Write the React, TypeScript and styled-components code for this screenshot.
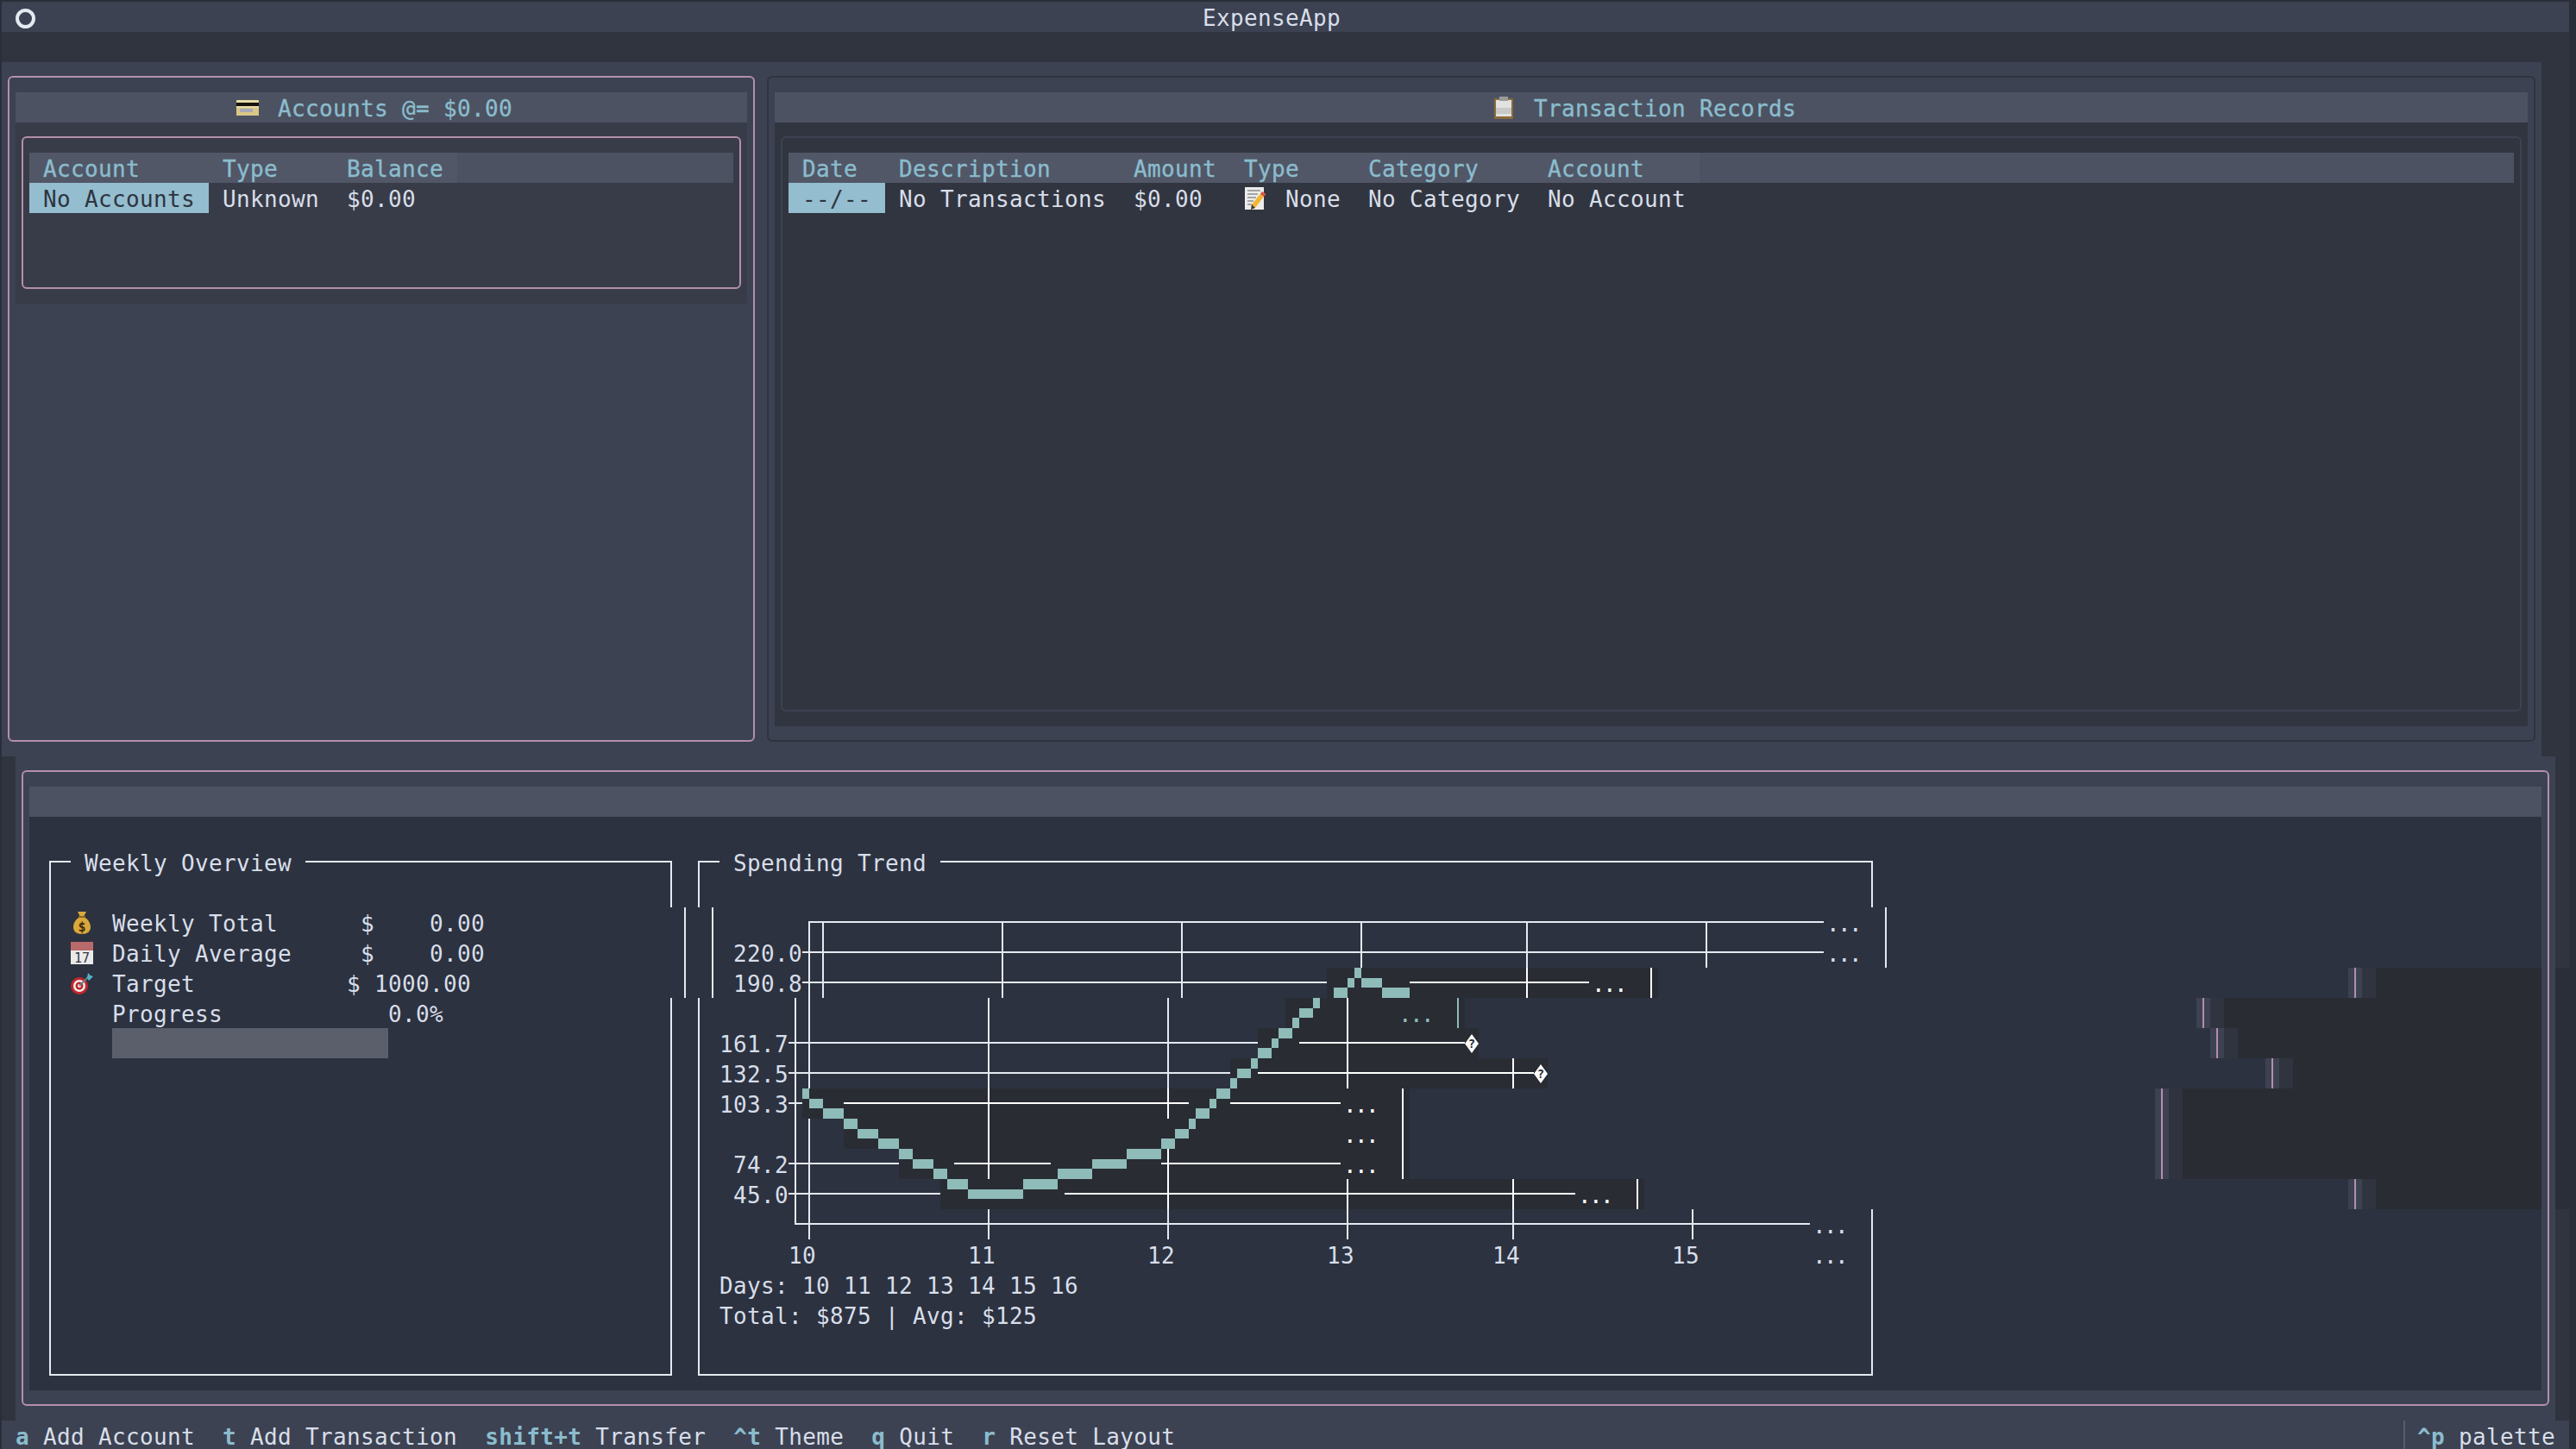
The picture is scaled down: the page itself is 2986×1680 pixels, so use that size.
import styled, { createGlobalStyle } from 'styled-components'

const CELL = 16
const ROW = 35
const TEXT_LINE = 39

const GlobalStyle = createGlobalStyle`
  html, body {
    margin: 0;
    padding: 0;
    background: #2a2e38;
    overflow: hidden;
  }
  * {
    box-sizing: border-box;
  }
`

const Terminal = styled.div`
  width: 2976px;
  height: 1678px;
  margin: 2px 0 0 2px;
  overflow: hidden;
  background: #30343f;
  color: #d8dee9;
  font-family: 'DejaVu Sans Mono', 'Liberation Mono', monospace;
  font-size: 26px;
  letter-spacing: 0.35px;
  line-height: ${TEXT_LINE}px;
  white-space: pre;
`

const Header = styled.div`
  height: ${ROW}px;
  padding: 0 48px 0 16px;
  display: grid;
  grid-template-columns: 1fr auto 1fr;
  align-items: start;
  background: #3c4252;
`

const Ring = styled.div`
  width: 23px;
  height: 23px;
  align-self: center;
  border: 4px solid #e5e9f0;
  border-radius: 50%;
`

const Spacer = styled.div`
  height: ${ROW}px;
`

const TopPanes = styled.div`
  width: 2944px;
  height: 805px;
  padding: 16px 7px 17px;
  display: flex;
  gap: 14px;
  background: #3c4252;
`

const Pane = styled.section<{ $width: number; $focused?: boolean }>`
  width: ${(p) => p.$width}px;
  padding: 17px 7px 16px;
  display: flex;
  flex-direction: column;
  border: 2px solid ${(p) => (p.$focused ? '#b48ead' : '#30343f')};
  border-radius: 6px;
`

const TitleBar = styled.div`
  height: ${ROW}px;
  flex: none;
  padding-right: ${CELL}px;
  display: flex;
  align-items: flex-start;
  justify-content: center;
  gap: 22px;
  background: #4c5261;
  color: #8bbccd;
  -webkit-text-stroke: 0.35px #8bbccd;
`

const TableArea = styled.div<{ $height: number; $tone: string }>`
  height: ${(p) => p.$height}px;
  padding: 16px 7px 17px;
  background: ${(p) => p.$tone};
`

const TableBox = styled.div<{ $border: string }>`
  height: 100%;
  padding: 17px 7px;
  border: 2px solid ${(p) => p.$border};
  border-radius: 6px;
`

const HeadRow = styled.div`
  height: ${ROW}px;
  display: flex;
  background: #4c5261;
  color: #8bbccd;
  -webkit-text-stroke: 0.35px #8bbccd;
`

const DataRow = styled.div`
  height: ${ROW}px;
  display: flex;
`

const HeadCell = styled.div<{ $cols: number }>`
  width: ${(p) => p.$cols * CELL}px;
  height: ${ROW}px;
  padding: 0 ${CELL}px;
  background: #515767;
`

const DataCell = styled.div<{ $cols: number; $cursor?: boolean; $center?: boolean }>`
  width: ${(p) => p.$cols * CELL}px;
  height: ${ROW}px;
  padding: 0 ${CELL}px;
  display: flex;
  align-items: flex-start;
  justify-content: ${(p) => (p.$center ? 'center' : 'flex-start')};
  background: ${(p) => (p.$cursor ? '#94bdcf' : 'transparent')};
  color: ${(p) => (p.$cursor ? '#2e3440' : 'inherit')};
`

const IconLabel = styled.span`
  margin-left: 22px;
`

const BottomRow = styled.div`
  margin-left: ${CELL}px;
  display: flex;
`

const BottomPane = styled.section`
  width: 2944px;
  height: 770px;
  padding: 16px 7px 17px;
  background: #3c4252;
`

const BottomBox = styled.div`
  height: 100%;
  padding: 17px 7px 16px;
  border: 2px solid #b48ead;
  border-radius: 6px;
`

const EmptyBar = styled.div`
  height: ${ROW}px;
  background: #4c5261;
`

const Body = styled.div`
  position: relative;
  width: 2912px;
  height: 665px;
  background: #2c3240;
`

const CurveLayer = styled.svg`
  position: absolute;
  top: 0;
  left: 0;
  pointer-events: none;
`

const StripColumn = styled.div`
  width: ${CELL}px;
  display: flex;
  flex-direction: column;
`

const Strip = styled.div<{ $height: number; $dark?: boolean }>`
  height: ${(p) => p.$height}px;
  background: ${(p) => (p.$dark ? '#2a2e38' : '#30343f')};
`

const GridRow = styled.div`
  height: ${ROW}px;
  display: flex;
`

const toneColors = { base: '#e5e9f0', bright: '#ffffff', teal: '#8fbcbb', pink: '#b48ead' }
const fillColors = {
  none: 'transparent',
  dark: '#292c33',
  bar: '#5a5f6b',
  panel: '#3c4252',
  strip: '#30343f',
}

type Tone = keyof typeof toneColors
type Fill = keyof typeof fillColors

const armRects = (arms: string, wide: boolean, color: string) => {
  const rect = (pos: string) => `linear-gradient(${color}, ${color}) ${pos} no-repeat`
  if (wide) return rect('0 16px / 100% 2px')
  const parts: string[] = []
  if (arms.includes('l')) parts.push(rect('0 16px / 9px 2px'))
  if (arms.includes('r')) parts.push(rect('7px 16px / 9px 2px'))
  if (arms.includes('u')) parts.push(rect('7px 0 / 2px 18px'))
  if (arms.includes('d')) parts.push(rect('7px 16px / 2px 19px'))
  return parts.join(', ')
}

const Run = styled.div<{ $cols: number; $arms: string; $tone: Tone; $fill: Fill }>`
  flex: none;
  width: ${(p) => p.$cols * CELL}px;
  height: ${ROW}px;
  display: flex;
  align-items: flex-start;
  color: ${(p) => (p.$tone === 'base' ? '#d8dee9' : toneColors[p.$tone])};
  background: ${(p) =>
    p.$arms ? armRects(p.$arms, p.$cols > 1, toneColors[p.$tone]) + ',' : ''} ${(p) => fillColors[p.$fill]};
`

const Dots = styled.span`
  margin-left: 3px;
  letter-spacing: -2.65px;
`

const Remainder = styled.div`
  flex: 1;
  height: ${ROW}px;
  background: #292c33;
`

const Footer = styled.footer`
  height: ${ROW}px;
  padding: 0 ${CELL}px;
  display: flex;
  background: #3c4252;
`

const FooterItem = styled.div`
  display: flex;
  gap: ${CELL}px;
  margin-right: ${CELL * 2}px;
`

const FooterKey = styled.span`
  color: #8bbccd;
  font-weight: bold;
`

const Palette = styled.div`
  margin-left: auto;
  padding-left: ${CELL}px;
  display: flex;
  gap: ${CELL}px;
  position: relative;
  &::before {
    content: '';
    position: absolute;
    left: 0;
    top: 0;
    bottom: 0;
    width: 2px;
    background: #565c6c;
  }
`

const Glyph = styled.svg`
  flex: none;
  align-self: center;
  overflow: visible;
  -webkit-text-stroke: 0;
`

const CardIcon = () => (
  <Glyph width={26} height={26} viewBox="0 0 26 26">
    <rect x={0} y={4} width={26} height={18} rx={1} fill="#e8dca6" />
    <rect x={0} y={7} width={26} height={4} fill="#16140e" />
    <rect x={0} y={13} width={26} height={9} fill="#d8c787" />
    <rect x={4} y={14} width={15} height={4} fill="#a9a9b8" />
  </Glyph>
)

const ClipboardIcon = () => (
  <Glyph width={26} height={26} viewBox="0 0 26 26">
    <rect x={2} y={2} width={22} height={24} rx={1} fill="#8a6a3c" />
    <rect x={4} y={4} width={18} height={19} fill="#e2e2e0" />
    <rect x={4} y={13} width={18} height={7} fill="#c9c9c9" />
    <rect x={8} y={0} width={10} height={5} fill="#9a9a9a" />
  </Glyph>
)

const MemoIcon = () => (
  <Glyph width={26} height={26} viewBox="0 0 26 26">
    <rect x={1} y={0} width={22} height={26} fill="#ececec" />
    <path d="M4 4h15M4 8h12M4 12h10M4 16h7M4 20h5" stroke="#8d8d8d" strokeWidth={1.6} />
    <path d="M21 5l4 3-12 16-5 2 1-6z" fill="#f2b632" />
    <path d="M21 5l4 3-2 3-4-3z" fill="#d9534f" />
    <path d="M9 20l4 4-5 2z" fill="#3a3a3a" />
  </Glyph>
)

const BagIcon = () => (
  <Glyph width={26} height={26} viewBox="0 0 26 26">
    <path d="M8 0h10l-3 6c6 3 8 8 8 12 0 5-4 8-10 8S3 23 3 18c0-4 2-9 8-12z" fill="#d9a83a" />
    <rect x={9} y={5} width={8} height={2} fill="#8a6420" />
    <text x={13} y={23} textAnchor="middle" fontSize={15} fontWeight="bold" fill="#3b2c10" letterSpacing={0}>
      $
    </text>
  </Glyph>
)

const CalendarIcon = () => (
  <Glyph width={26} height={26} viewBox="0 0 26 26">
    <rect x={0} y={0} width={26} height={26} fill="#eaeaea" />
    <rect x={0} y={0} width={26} height={10} fill="#b96a6a" />
    <text x={13} y={24} textAnchor="middle" fontSize={15} fill="#33363d" letterSpacing={0}>
      17
    </text>
  </Glyph>
)

const DartIcon = () => (
  <Glyph width={26} height={26} viewBox="0 0 26 26">
    <circle cx={10} cy={16} r={10} fill="#c4262a" />
    <circle cx={10} cy={16} r={7} fill="#f1f1f1" />
    <circle cx={10} cy={16} r={4.5} fill="#c4262a" />
    <circle cx={10} cy={16} r={2} fill="#f1f1f1" />
    <path d="M10 16L21 5" stroke="#6c7a80" strokeWidth={2} />
    <path d="M19 7l1-6 3 3 3 1-5 5z" fill="#4fb4c4" />
  </Glyph>
)

const DiamondIcon = () => (
  <Glyph width={16} height={22} viewBox="0 0 16 22">
    <path d="M8 0L16 11 8 22 0 11z" fill="#ffffff" />
    <text x={8} y={16} textAnchor="middle" fontSize={14} fontWeight="bold" fill="#292c33" letterSpacing={0}>
      ?
    </text>
  </Glyph>
)

const icons = { bag: BagIcon, calendar: CalendarIcon, dart: DartIcon, diamond: DiamondIcon }
type IconName = keyof typeof icons

type Cell = {
  ch?: string
  arms: string
  tone: Tone
  fill: Fill
  icon?: IconName
}

const FIRST_ROW = 27
const LAST_ROW = 45
const FIRST_COL = 2
const LAST_COL = 183

const grid: Cell[][] = []
for (let r = FIRST_ROW; r <= LAST_ROW; r++) {
  const cells: Cell[] = []
  for (let c = FIRST_COL; c <= LAST_COL; c++) cells.push({ arms: '', tone: 'base', fill: 'none' })
  grid.push(cells)
}

const at = (r: number, c: number) => grid[r - FIRST_ROW][c - FIRST_COL]

const arm = (r: number, c: number, arms: string, tone: Tone = 'base') => {
  const cell = at(r, c)
  cell.arms = Array.from(new Set((cell.arms + arms).split(''))).sort().join('')
  if (tone !== 'base') cell.tone = tone
}

const hline = (r: number, from: number, to: number, tone: Tone = 'base') => {
  for (let c = from; c <= to; c++) arm(r, c, 'lr', tone)
}

const vline = (r: number, cols: number[], tone: Tone = 'base') => {
  cols.forEach((c) => arm(r, c, 'ud', tone))
}

const put = (r: number, c: number, text: string, tone: Tone = 'base') => {
  text.split('').forEach((ch, i) => {
    at(r, c + i).ch = ch
    if (tone !== 'base') at(r, c + i).tone = tone
  })
}

const fill = (r: number, from: number, to: number, kind: Fill) => {
  for (let c = from; c <= to; c++) at(r, c).fill = kind
}

// frames
const frameTop = (left: number, right: number, title: string) => {
  arm(28, left, 'dr')
  arm(28, left + 1, 'lr')
  put(28, left + 3, title)
  hline(28, left + 4 + title.length, right - 1)
  arm(28, right, 'dl')
  arm(45, left, 'ru')
  hline(45, left + 1, right - 1)
  arm(45, right, 'lu')
}

frameTop(3, 48, 'Weekly Overview')
frameTop(50, 135, 'Spending Trend')

for (let r = 29; r <= 44; r++) vline(r, [3])
for (let r = 30; r <= 32; r++) vline(r, [49, 51])
vline(29, [48, 50, 135])
for (let r = 33; r <= 44; r++) vline(r, [48, 50])
for (let r = 40; r <= 44; r++) vline(r, [135])

// weekly overview
at(30, 5).icon = 'bag'
at(31, 5).icon = 'calendar'
at(32, 5).icon = 'dart'
put(30, 8, 'Weekly Total      $    0.00')
put(31, 8, 'Daily Average     $    0.00')
put(32, 8, 'Target           $ 1000.00')
put(33, 8, 'Progress            0.0%')
fill(34, 8, 27, 'bar')

// chart, shifted rows first
arm(30, 58, 'dr')
hline(30, 59, 131)
;[59, 72, 85, 98, 110, 123].forEach((c) => arm(30, c, 'd'))
put(30, 132, '...')
vline(30, [136])

put(31, 53, '220.0')
hline(31, 58, 131)
vline(31, [58, 59, 72, 85, 98, 110, 123])
put(31, 132, '...')
vline(31, [136])

put(32, 53, '190.8')
hline(32, 58, 95)
vline(32, [58, 59, 72, 85])
fill(32, 96, 119, 'dark')
hline(32, 102, 114, 'bright')
vline(32, [110], 'bright')
put(32, 115, '...', 'bright')
vline(32, [119], 'bright')

vline(33, [57, 58, 71, 84])
fill(33, 93, 105, 'dark')
vline(33, [97], 'bright')
put(33, 101, '...', 'teal')
vline(33, [105], 'teal')

put(34, 52, '161.7')
hline(34, 57, 90)
vline(34, [57, 58, 71, 84])
fill(34, 91, 106, 'dark')
hline(34, 94, 105, 'bright')
vline(34, [97], 'bright')
at(34, 106).icon = 'diamond'

put(35, 52, '132.5')
hline(35, 57, 88)
vline(35, [57, 58, 71, 84])
fill(35, 89, 111, 'dark')
hline(35, 91, 110, 'bright')
vline(35, [97, 109], 'bright')
at(35, 111).icon = 'diamond'

put(36, 52, '103.3')
hline(36, 57, 57)
vline(36, [57])
fill(36, 58, 101, 'dark')
hline(36, 61, 85, 'bright')
hline(36, 89, 96, 'bright')
vline(36, [71, 84, 101], 'bright')
put(36, 97, '...', 'bright')

vline(37, [57, 58])
fill(37, 61, 101, 'dark')
vline(37, [71, 101], 'bright')
put(37, 97, '...', 'bright')

put(38, 53, '74.2')
hline(38, 57, 64)
vline(38, [57, 58])
fill(38, 65, 101, 'dark')
hline(38, 69, 75, 'bright')
hline(38, 84, 96, 'bright')
vline(38, [71, 84, 101], 'bright')
put(38, 97, '...', 'bright')

put(39, 53, '45.0')
hline(39, 57, 67)
vline(39, [57, 58])
fill(39, 68, 118, 'dark')
hline(39, 77, 113, 'bright')
vline(39, [84, 97, 109, 118], 'bright')
put(39, 114, '...', 'bright')

arm(40, 57, 'ru')
hline(40, 58, 130)
vline(40, [58, 71, 84, 97, 109, 122])
put(40, 131, '...')

put(41, 57, '10')
put(41, 70, '11')
put(41, 83, '12')
put(41, 96, '13')
put(41, 108, '14')
put(41, 121, '15')
put(41, 131, '...')
put(42, 52, 'Days: 10 11 12 13 14 15 16')
put(43, 52, 'Total: $875 | Avg: $125')

// rows where the pane edge slid left, the rest of the row goes dark
const ghostColumns: Record<number, number> = { 32: 170, 33: 159, 34: 160, 35: 164, 36: 156, 37: 156, 38: 156, 39: 170 }

Object.entries(ghostColumns).forEach(([row, col]) => {
  const r = Number(row)
  fill(r, col, col, 'panel')
  arm(r, col, 'ud', 'pink')
  fill(r, col + 1, col + 1, 'strip')
})

type Segment = { cols: number; cell: Cell; text: string }

const toSegments = (cells: Cell[]) => {
  const segments: Segment[] = []
  cells.forEach((cell) => {
    const last = segments[segments.length - 1]
    const sameStyle = last && last.cell.fill === cell.fill && !cell.icon && !last.cell.icon
    const bothBlank = sameStyle && !last.text && !cell.ch && !last.cell.arms && !cell.arms
    const bothText = sameStyle && last.text && cell.ch && last.cell.tone === cell.tone
    const bothLine = sameStyle && !last.text && !cell.ch && last.cell.arms === 'lr' && cell.arms === 'lr' && last.cell.tone === cell.tone
    if (bothBlank || bothText || bothLine) {
      last.cols += 1
      last.text += cell.ch ?? ''
    } else {
      segments.push({ cols: 1, cell, text: cell.ch ?? '' })
    }
  })
  return segments
}

const lastCells = (r: number) => {
  const ghost = ghostColumns[r]
  return ghost ? grid[r - FIRST_ROW].slice(0, ghost + 2 - FIRST_COL) : grid[r - FIRST_ROW]
}

const curve: [number, number, number, number][] = [
  [930, 938, 1262, 1274], [938, 954, 1274, 1285], [954, 978, 1285, 1297], [978, 994, 1297, 1309],
  [994, 1018, 1309, 1320], [1018, 1042, 1320, 1332], [1042, 1058, 1332, 1344], [1058, 1082, 1344, 1355],
  [1082, 1098, 1355, 1367], [1098, 1122, 1367, 1379], [1122, 1186, 1379, 1390], [1186, 1226, 1367, 1379],
  [1226, 1266, 1355, 1367], [1266, 1306, 1344, 1355], [1306, 1346, 1332, 1344], [1346, 1362, 1320, 1332],
  [1362, 1378, 1309, 1320], [1378, 1386, 1297, 1309], [1386, 1402, 1285, 1297], [1402, 1410, 1274, 1285],
  [1410, 1426, 1262, 1274], [1426, 1434, 1250, 1262], [1434, 1450, 1239, 1250], [1450, 1458, 1227, 1239],
  [1458, 1474, 1215, 1227], [1474, 1482, 1204, 1215], [1482, 1498, 1192, 1204], [1498, 1506, 1180, 1192],
  [1506, 1522, 1169, 1180], [1522, 1530, 1157, 1169], [1546, 1562, 1145, 1157], [1562, 1570, 1134, 1145],
  [1570, 1578, 1122, 1134], [1578, 1602, 1134, 1145], [1602, 1634, 1145, 1157],
]

const accountColumns = [
  { title: 'Account', cols: 13 },
  { title: 'Type', cols: 9 },
  { title: 'Balance', cols: 9 },
]

const transactionColumns = [
  { title: 'Date', cols: 7 },
  { title: 'Description', cols: 17 },
  { title: 'Amount', cols: 8 },
  { title: 'Type', cols: 9 },
  { title: 'Category', cols: 13 },
  { title: 'Account', cols: 12 },
]

const shortcuts = [
  { key: 'a', label: 'Add Account' },
  { key: 't', label: 'Add Transaction' },
  { key: 'shift+t', label: 'Transfer' },
  { key: '^t', label: 'Theme' },
  { key: 'q', label: 'Quit' },
  { key: 'r', label: 'Reset Layout' },
]

const App = () => {
  const rows = grid.map((_, i) => FIRST_ROW + i)

  return (
    <>
      <GlobalStyle />
      <Terminal>
        <Header>
          <Ring />
          <span>ExpenseApp</span>
        </Header>
        <Spacer />
        <TopPanes>
          <Pane $width={866} $focused>
            <TitleBar>
              <CardIcon />
              <span>Accounts @= $0.00</span>
            </TitleBar>
            <TableArea $height={210} $tone="#383c48">
              <TableBox $border="#b48ead">
                <HeadRow>
                  {accountColumns.map((column) => (
                    <HeadCell key={column.title} $cols={column.cols}>
                      {column.title}
                    </HeadCell>
                  ))}
                </HeadRow>
                <DataRow>
                  <DataCell $cols={13} $cursor>
                    No Accounts
                  </DataCell>
                  <DataCell $cols={9}>Unknown</DataCell>
                  <DataCell $cols={9}>$0.00</DataCell>
                </DataRow>
              </TableBox>
            </TableArea>
          </Pane>
          <Pane $width={2050}>
            <TitleBar>
              <ClipboardIcon />
              <span>Transaction Records</span>
            </TitleBar>
            <TableArea $height={700} $tone="#313540">
              <TableBox $border="#3d4252">
                <HeadRow>
                  {transactionColumns.map((column) => (
                    <HeadCell key={column.title} $cols={column.cols}>
                      {column.title}
                    </HeadCell>
                  ))}
                </HeadRow>
                <DataRow>
                  <DataCell $cols={7} $cursor $center>
                    --/--
                  </DataCell>
                  <DataCell $cols={17}>No Transactions</DataCell>
                  <DataCell $cols={8}>$0.00</DataCell>
                  <DataCell $cols={9}>
                    <MemoIcon />
                    <IconLabel>None</IconLabel>
                  </DataCell>
                  <DataCell $cols={13}>No Category</DataCell>
                  <DataCell $cols={12}>No Account</DataCell>
                </DataRow>
              </TableBox>
            </TableArea>
          </Pane>
        </TopPanes>
        <BottomRow>
          <BottomPane>
            <BottomBox>
              <EmptyBar />
              <Body>
                {rows.map((r) => (
                  <GridRow key={r}>
                    {toSegments(lastCells(r)).map((segment, i) => {
                      const Icon = segment.cell.icon ? icons[segment.cell.icon] : null
                      return (
                        <Run
                          key={i}
                          $cols={segment.cols}
                          $arms={segment.cell.arms}
                          $tone={segment.cell.tone}
                          $fill={segment.cell.fill}
                        >
                          {Icon ? <Icon /> : segment.text === '...' ? <Dots>...</Dots> : segment.text}
                        </Run>
                      )
                    })}
                    {ghostColumns[r] ? <Remainder /> : null}
                  </GridRow>
                ))}
                <CurveLayer width={2912} height={665} viewBox="34 947 2912 665" shapeRendering="crispEdges">
                  {curve.map(([x0, x1, y0, y1]) => (
                    <rect key={`${x0}-${y0}`} x={x0} y={y0} width={x1 - x0} height={y1 - y0} fill="#8fbcb8" />
                  ))}
                </CurveLayer>
              </Body>
            </BottomBox>
          </BottomPane>
          <StripColumn>
            <Strip $height={245} />
            <Strip $height={280} $dark />
            <Strip $height={245} />
          </StripColumn>
        </BottomRow>
        <Footer>
          {shortcuts.map((shortcut) => (
            <FooterItem key={shortcut.key}>
              <FooterKey>{shortcut.key}</FooterKey>
              <span>{shortcut.label}</span>
            </FooterItem>
          ))}
          <Palette>
            <FooterKey>^p</FooterKey>
            <span>palette</span>
          </Palette>
        </Footer>
      </Terminal>
    </>
  )
}

export default App
